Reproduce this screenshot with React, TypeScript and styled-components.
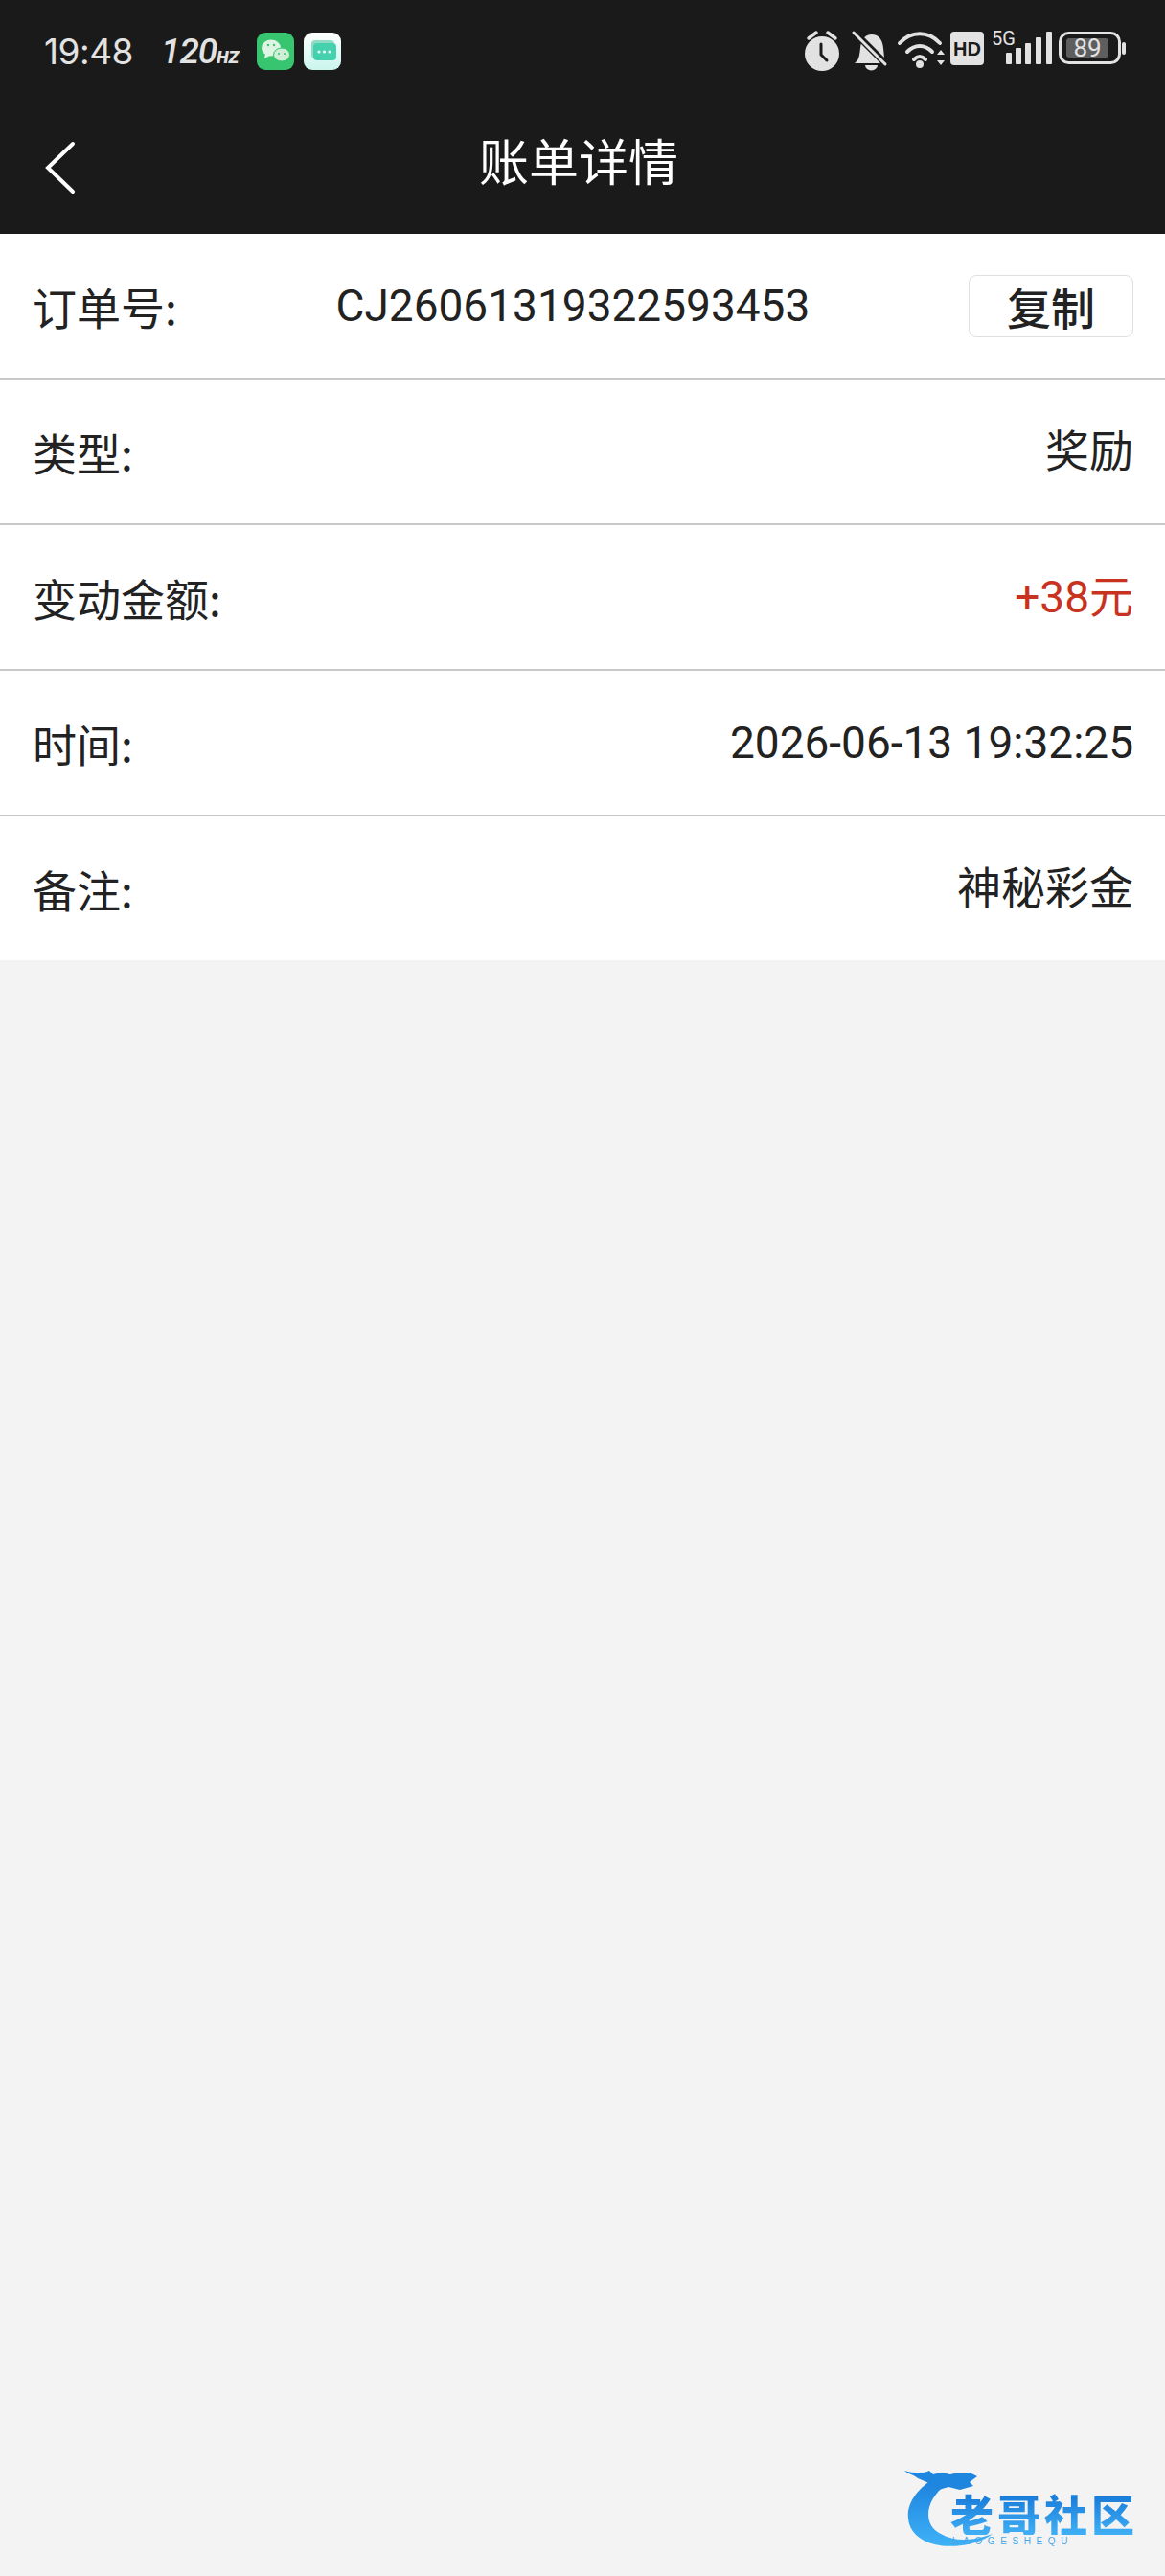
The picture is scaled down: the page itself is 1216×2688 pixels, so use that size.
import React from "react";
import styled, { createGlobalStyle } from "styled-components";

const Global = createGlobalStyle`
  html, body { margin: 0; padding: 0; background: #f3f3f3; }
  body { font-family: "Roboto", "Noto Sans CJK SC", sans-serif; }
  * { box-sizing: border-box; }
`;

const Page = styled.div`
  width: 1216px;
  height: 2688px;
  background: #f3f3f3;
  display: flex;
  flex-direction: column;
  overflow: hidden;
  position: relative;
`;

const Top = styled.header`
  background: #1a1a1a;
  height: 244px;
  flex: none;
  display: flex;
  flex-direction: column;
`;

const StatusBar = styled.div`
  height: 106px;
  padding: 28px 46px 0 46px;
  display: flex;
  justify-content: space-between;
  align-items: flex-start;
  color: #e2e2e2;
`;

const StatusLeft = styled.div`
  display: flex;
  align-items: center;
  height: 50px;
`;

const Clock = styled.span`
  font-family: "Inter", "Roboto", sans-serif;
  font-size: 37px;
  font-weight: 400;
  letter-spacing: -0.5px;
  width: 112px;
`;

const Hz = styled.span`
  font-family: "Roboto", sans-serif;
  font-style: italic;
  font-size: 37px;
  font-weight: 500;
  width: 90px;
  margin-left: 10px;
  letter-spacing: -1px;
  & > small {
    font-size: 18px;
    font-weight: 900;
    letter-spacing: 0;
  }
`;

const AppIcon = styled.svg`
  width: 39px;
  height: 39px;
  margin-left: 10px;
  flex: none;
  display: block;
`;

const StatusIcons = styled.svg`
  width: 346px;
  height: 50px;
  display: block;
  margin: 0 -14px 0 0;
`;

const NavBar = styled.div`
  height: 138px;
  display: flex;
  align-items: center;
  justify-content: center;
  position: relative;
`;

const BackIcon = styled.svg`
  position: absolute;
  left: 46px;
  top: 40px;
  width: 36px;
  height: 58px;
`;

const Title = styled.h1`
  margin: 0 0 0 -8px;
  padding-bottom: 16px;
  color: #fff;
  font-size: 52px;
  font-weight: 400;
  font-family: "Noto Sans CJK SC", sans-serif;
  line-height: 1;
`;

const List = styled.section`
  background: #fff;
  flex: none;
`;

const Row = styled.div`
  height: 152px;
  padding: 0 33px 0 34px;
  display: flex;
  align-items: center;
  justify-content: space-between;
  border-bottom: 2px solid #c9c9c9;
  font-size: 46px;
  color: #222;
  &:last-child { border-bottom: 0; height: 150px; }
`;

const Label = styled.span`
  font-family: "Noto Sans CJK SC", sans-serif;
  font-size: 46px;
  line-height: 1;
`;

const Value = styled.span<{ $accent?: boolean }>`
  font-family: "Roboto", "Noto Sans CJK SC", sans-serif;
  color: ${(p) => (p.$accent ? "#c8331f" : "#222")};
  line-height: 1;
`;

const CopyButton = styled.button`
  width: 172px;
  height: 65px;
  border: 1px solid #e0e0e0;
  border-radius: 8px;
  background: #fff;
  color: #222;
  font-family: "Noto Sans CJK SC", sans-serif;
  font-size: 46px;
  font-weight: 500;
  padding: 0;
  line-height: 65px;
  display: flex;
  align-items: center;
  justify-content: center;
`;

const Watermark = styled.div`
  position: absolute;
  left: 944px;
  top: 2574px;
  width: 260px;
  height: 90px;
`;

const DragonIcon = styled.svg`
  position: absolute;
  left: 0;
  top: 0;
  width: 140px;
  height: 90px;
`;

const WmTitle = styled.div`
  position: absolute;
  left: 48px;
  top: 26px;
  font-family: "Noto Sans CJK SC", sans-serif;
  font-weight: 900;
  font-size: 45px;
  letter-spacing: 4px;
  line-height: 1;
  white-space: nowrap;
  background: linear-gradient(#1576d6, #40b0f5);
  -webkit-background-clip: text;
  background-clip: text;
  color: transparent;
`;

const WmSub = styled.div`
  position: absolute;
  left: 50px;
  top: 73px;
  font-family: "Liberation Sans", sans-serif;
  font-size: 10px;
  letter-spacing: 5.6px;
  line-height: 1;
  color: #4aa6e6;
  white-space: nowrap;
`;

const rows = [
  { label: "类型:", value: "奖励" },
  { label: "变动金额:", value: "+38元", accent: true },
  { label: "时间:", value: "2026-06-13 19:32:25" },
  { label: "备注:", value: "神秘彩金" },
];

export default function App() {
  return (
    <Page>
      <Global />
      <Top>
        <StatusBar>
          <StatusLeft>
            <Clock>19:48</Clock>
            <Hz>120<small>HZ</small></Hz>
            <AppIcon viewBox="0 0 39 39">
              <rect width="39" height="39" rx="9" fill="#38c56f" />
              <ellipse cx="15" cy="16" rx="10" ry="8.5" fill="#dff5e4" />
              <path d="M9 22l-1 5 6-3z" fill="#dff5e4" />
              <ellipse cx="26" cy="23" rx="8.5" ry="7" fill="#cfeed6" stroke="#38c56f" strokeWidth="1" />
              <circle cx="12" cy="13" r="1.2" fill="#38c56f" />
              <circle cx="18" cy="13" r="1.2" fill="#38c56f" />
              <circle cx="23" cy="22" r="1" fill="#38c56f" />
              <circle cx="29" cy="22" r="1" fill="#38c56f" />
            </AppIcon>
            <AppIcon viewBox="0 0 39 39">
              <defs>
                <linearGradient id="msgbg" x1="0" y1="0" x2="0" y2="1">
                  <stop offset="0" stopColor="#ffffff" />
                  <stop offset="1" stopColor="#c9f5ec" />
                </linearGradient>
              </defs>
              <rect width="39" height="39" rx="9" fill="url(#msgbg)" />
              <rect x="8" y="8" width="24" height="19" rx="4" fill="#8fdcc6" />
              <rect x="10" y="11" width="24" height="18" rx="4" fill="#45d1ae" />
              <circle cx="16" cy="20" r="1.6" fill="#e8fff8" />
              <circle cx="21.5" cy="20" r="1.6" fill="#e8fff8" />
              <circle cx="27" cy="20" r="1.6" fill="#e8fff8" />
            </AppIcon>
          </StatusLeft>
          <StatusIcons viewBox="0 0 346 50" fill="#e2e2e2">
            {/* alarm */}
            <g transform="translate(0 2)">
              <circle cx="20" cy="26" r="18" />
              <path d="M6 10l8-6M34 10l-8-6" stroke="#e2e2e2" strokeWidth="3.5" strokeLinecap="round" />
              <path d="M19 16v11l6 6" stroke="#1a1a1a" strokeWidth="3" fill="none" strokeLinecap="round" />
            </g>
            {/* silent bell */}
            <g transform="translate(50 2)">
              <path d="M4 36c4-3 5-6 6-16 1-10 6-14 12-14s11 4 12 14c1 10 1 13 3 16z" />
              <path d="M15 38a6 5 0 0 0 13 0z" />
              <path d="M2 2l34 34" stroke="#1a1a1a" strokeWidth="7" />
              <path d="M3 4l33 33" stroke="#e2e2e2" strokeWidth="3" strokeLinecap="round" />
            </g>
            {/* wifi */}
            <g transform="translate(99 2)" fill="none" stroke="#e2e2e2" strokeWidth="4" strokeLinecap="round">
              <path d="M2 15c12-13 30-13 42 0" />
              <path d="M10 24c8-8 18-8 26 0" />
              <path d="M17 32c4-4 8-4 12 0" />
              <circle cx="23" cy="37" r="2" fill="#e2e2e2" />
              <path d="M41 27l4-5 4 5z M41 33h8l-4 5z" fill="#e2e2e2" stroke="none" />
            </g>
            {/* HD */}
            <g transform="translate(154 5)">
              <rect x="0" y="0" width="35" height="35" rx="4" />
              <text x="17.5" y="24.5" textAnchor="middle" fontFamily="Liberation Sans, sans-serif" fontWeight="700" fontSize="20" fill="#1a1a1a">HD</text>
            </g>
            {/* 5G signal */}
            <g transform="translate(197 0)">
              <text x="0" y="19" fontFamily="Roboto, sans-serif" fontSize="20">5G</text>
              <rect x="15" y="27" width="6" height="12" rx="1" />
              <rect x="25" y="22" width="6" height="17" rx="1" />
              <rect x="35" y="17" width="6" height="22" rx="1" />
              <rect x="46" y="11" width="6" height="28" rx="1" />
              <rect x="57" y="5" width="6" height="34" rx="1" />
            </g>
            {/* battery */}
            <g transform="translate(267 5)">
              <rect x="1.5" y="1.5" width="62" height="31" rx="9" fill="none" stroke="#e2e2e2" strokeWidth="3" />
              <rect x="8" y="7" width="44" height="20" rx="3" fill="#5e5e5e" />
              <text x="30" y="26" textAnchor="middle" fontFamily="Roboto, sans-serif" fontSize="26" fill="#e2e2e2">89</text>
              <rect x="66" y="11" width="4" height="13" rx="2" />
            </g>
          </StatusIcons>
        </StatusBar>
        <NavBar>
          <BackIcon viewBox="0 0 36 58" fill="none" stroke="#fff" strokeWidth="4" strokeLinecap="round">
            <path d="M30 4 4 29l26 25" />
          </BackIcon>
          <Title>账单详情</Title>
        </NavBar>
      </Top>
      <List>
        <Row>
          <Label>订单号:</Label>
          <Value>CJ26061319322593453</Value>
          <CopyButton type="button">复制</CopyButton>
        </Row>
        {rows.map((r) => (
          <Row key={r.label}>
            <Label>{r.label}</Label>
            <Value $accent={r.accent}>{r.value}</Value>
          </Row>
        ))}
      </List>
      <Watermark>
        <DragonIcon viewBox="0 0 140 90">
          <defs>
            <linearGradient id="dr" x1="0" y1="0" x2="0" y2="1">
              <stop offset="0" stopColor="#1a7fdc" />
              <stop offset="1" stopColor="#3fb2f7" />
            </linearGradient>
          </defs>
          <path d="M34 10C14 22 2 38 4 54c2 22 28 32 56 28 14-2 24-6 32-12-22 8-40 8-54 0C18 60 22 34 44 18z" fill="url(#dr)" />
          <path d="M0 4c10 3 20 3 26 0l4 4 8-2 10 2 8-2 12 0 8 4-8 6 4 4-14 4-12-3-10 3-8-6-14-6C10 8 4 8 0 4z" fill="#1f86e0" />
        </DragonIcon>
        <WmTitle>老哥社区</WmTitle>
        <WmSub>LAOGESHEQU</WmSub>
      </Watermark>
    </Page>
  );
}
